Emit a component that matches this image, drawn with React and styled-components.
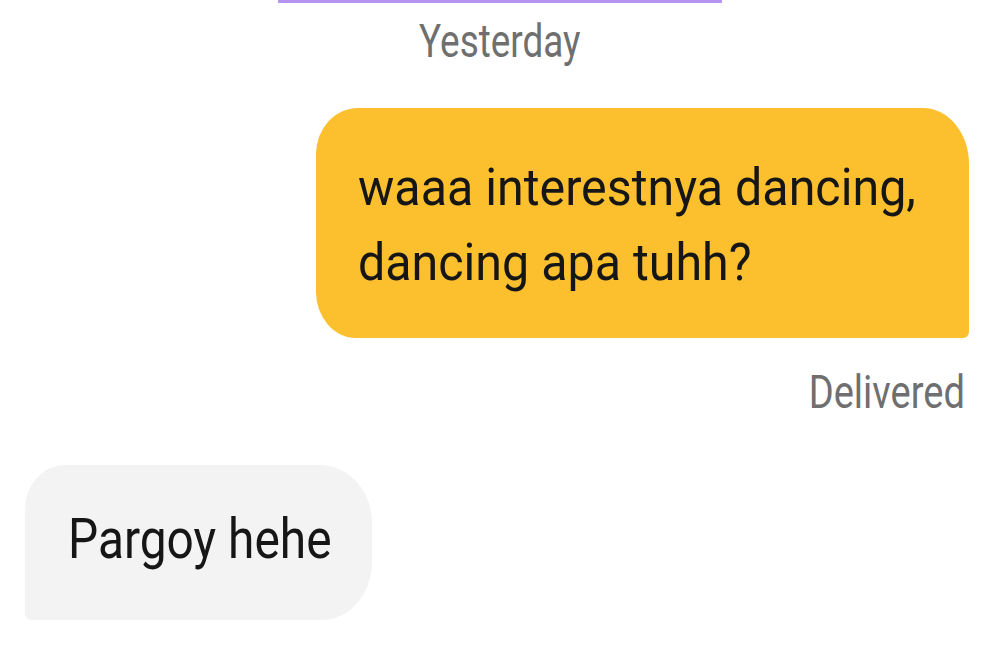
import React from 'react';
import styled, { createGlobalStyle } from 'styled-components';

const GlobalStyle = createGlobalStyle`
  html, body {
    margin: 0;
    padding: 0;
    background: #ffffff;
  }
  body {
    font-family: Roboto, 'Noto Sans', sans-serif;
  }
`;

const Screen = styled.div`
  width: 1000px;
  height: 667px;
  overflow: hidden;
  background: #ffffff;
  display: flex;
  flex-direction: column;
`;

const TopBar = styled.div`
  align-self: center;
  width: 444px;
  height: 3px;
  background: #b894f2;
`;

const DayLabel = styled.div`
  margin-top: 10px;
  height: 56px;
  font-size: 47px;
  line-height: 56px;
  color: #6f6f6f;
  text-align: center;
  span {
    display: inline-block;
    transform: scaleX(0.785);
    transform-origin: center;
  }
`;

const Row = styled.div`
  display: flex;
  justify-content: ${(p) => (p.$mine ? 'flex-end' : 'flex-start')};
  padding: ${(p) => (p.$mine ? '0 31px 0 0' : '0 0 0 25px')};
`;

const Bubble = styled.div`
  box-sizing: border-box;
  background: ${(p) => (p.$mine ? '#fcc02e' : '#f3f3f3')};
  color: #161616;
`;

const MineBubble = styled(Bubble)`
  margin-top: 39px;
  width: 653px;
  height: 230px;
  padding: 42px 0 0 42px;
  border-radius: 42px 46px 6px 40px / 46px 56px 6px 46px;
`;

const TheirBubble = styled(Bubble)`
  margin-top: 45px;
  width: 347px;
  height: 155px;
  padding: 39px 0 0 43px;
  border-radius: 40px 52px 50px 6px / 44px 58px 58px 6px;
`;

const MessageText = styled.div`
  font-size: ${(p) => p.$size}px;
  line-height: ${(p) => p.$line}px;
  transform: scaleX(${(p) => p.$scale});
  transform-origin: left top;
  width: ${(p) => p.$width}px;
  white-space: ${(p) => (p.$nowrap ? 'nowrap' : 'normal')};
`;

const Status = styled.div`
  margin-top: 26px;
  padding-right: 35px;
  height: 56px;
  font-size: 47px;
  line-height: 56px;
  color: #6f6f6f;
  text-align: right;
  span {
    display: inline-block;
    transform: scaleX(0.81);
    transform-origin: right center;
  }
`;

export default function App() {
  return (
    <>
      <GlobalStyle />
      <Screen>
        <TopBar />
        <DayLabel>
          <span>Yesterday</span>
        </DayLabel>
        <Row $mine>
          <MineBubble $mine>
            <MessageText $size={52} $line={75} $scale={0.93} $width={611}>
              waaa interestnya dancing, dancing apa tuhh?
            </MessageText>
          </MineBubble>
        </Row>
        <Status>
          <span>Delivered</span>
        </Status>
        <Row>
          <TheirBubble>
            <MessageText $size={55} $line={70} $scale={0.87} $width={300} $nowrap>
              Pargoy hehe
            </MessageText>
          </TheirBubble>
        </Row>
      </Screen>
    </>
  );
}
